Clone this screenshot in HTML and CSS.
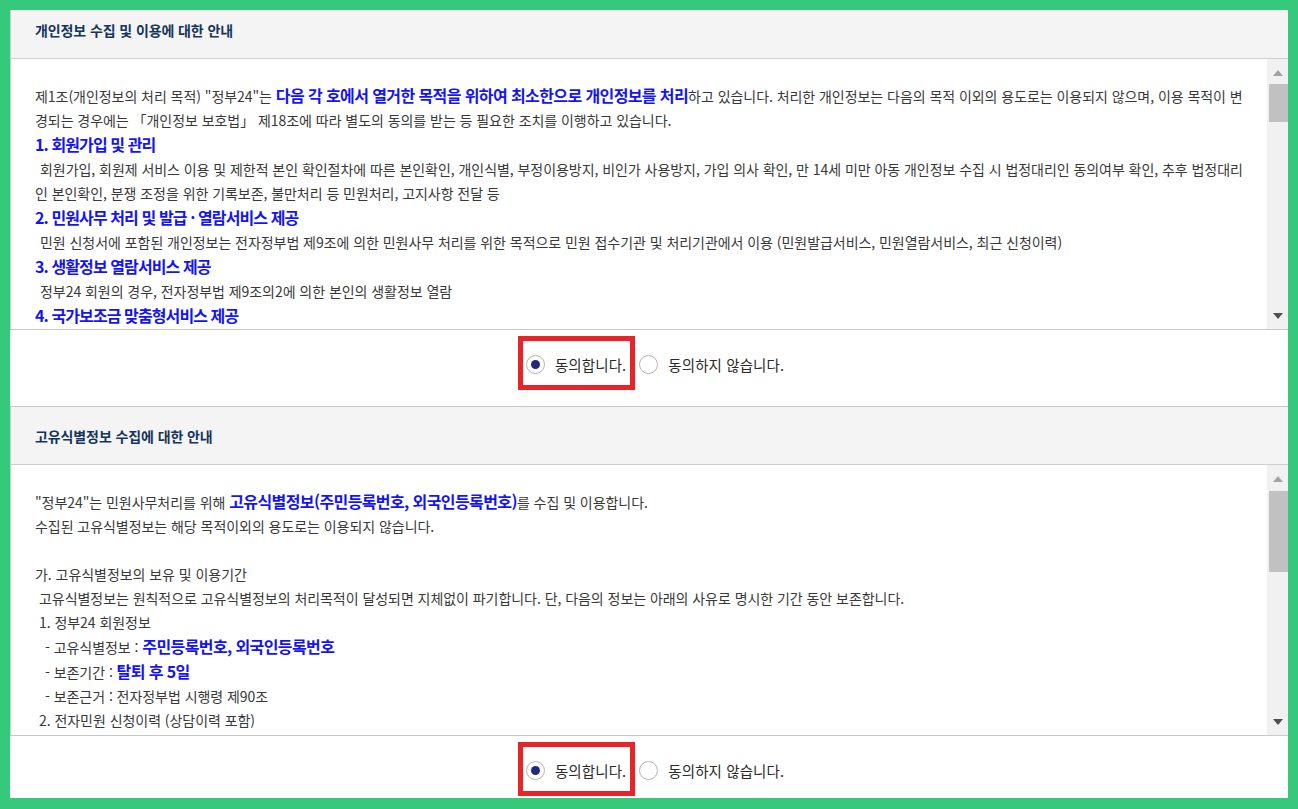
FILE: index.html
```html
<!DOCTYPE html>
<html lang="ko">
<head>
<meta charset="utf-8">
<title>정부24 약관 동의</title>
<link rel="stylesheet" href="styles.css">
</head>
<body>
<div class="viewport">
  <div class="page">
    <section class="agree">
      <h3 class="agree-head">개인정보 수집 및 이용에 대한 안내</h3>
      <div class="agree-box">
        <div class="agree-text">
          <p class="para">제1조(개인정보의 처리 목적) "정부24"는 <strong class="hl">다음 각 호에서 열거한 목적을 위하여 최소한으로 개인정보를 처리</strong>하고 있습니다. 처리한 개인정보는 다음의 목적 이외의 용도로는 이용되지 않으며, 이용 목적이 변<br>경되는 경우에는 「개인정보 보호법」 제18조에 따라 별도의 동의를 받는 등 필요한 조치를 이행하고 있습니다.</p>
          <h4 class="item-title">1. 회원가입 및 관리</h4>
          <p class="item-desc">회원가입, 회원제 서비스 이용 및 제한적 본인 확인절차에 따른 본인확인, 개인식별, 부정이용방지, 비인가 사용방지, 가입 의사 확인, 만 14세 미만 아동 개인정보 수집 시 법정대리인 동의여부 확인, 추후 법정대리<br>인 본인확인, 분쟁 조정을 위한 기록보존, 불만처리 등 민원처리, 고지사항 전달 등</p>
          <h4 class="item-title">2. 민원사무 처리 및 발급 · 열람서비스 제공</h4>
          <p class="item-desc">민원 신청서에 포함된 개인정보는 전자정부법 제9조에 의한 민원사무 처리를 위한 목적으로 민원 접수기관 및 처리기관에서 이용 (민원발급서비스, 민원열람서비스, 최근 신청이력)</p>
          <h4 class="item-title">3. 생활정보 열람서비스 제공</h4>
          <p class="item-desc">정부24 회원의 경우, 전자정부법 제9조의2에 의한 본인의 생활정보 열람</p>
          <h4 class="item-title">4. 국가보조금 맞춤형서비스 제공</h4>
        </div>
        <div class="scrollbar" aria-hidden="true">
          <span class="sb-arrow sb-up"></span>
          <span class="sb-thumb" style="top:25px;height:38px"></span>
          <span class="sb-arrow sb-down"></span>
        </div>
      </div>
      <div class="agree-choice">
        <label class="choice is-marked"><input type="radio" name="agree1" checked><span>동의합니다.</span></label>
        <label class="choice"><input type="radio" name="agree1"><span>동의하지 않습니다.</span></label>
      </div>
    </section>

    <section class="agree">
      <h3 class="agree-head">고유식별정보 수집에 대한 안내</h3>
      <div class="agree-box">
        <div class="agree-text">
          <p class="para">"정부24"는 민원사무처리를 위해 <strong class="hl">고유식별정보(주민등록번호, 외국인등록번호)</strong>를 수집 및 이용합니다.<br>수집된 고유식별정보는 해당 목적이외의 용도로는 이용되지 않습니다.</p>
          <p class="para gap-top">가. 고유식별정보의 보유 및 이용기간</p>
          <p class="para ind1">고유식별정보는 원칙적으로 고유식별정보의 처리목적이 달성되면 지체없이 파기합니다. 단, 다음의 정보는 아래의 사유로 명시한 기간 동안 보존합니다.</p>
          <p class="para ind1">1. 정부24 회원정보</p>
          <p class="para ind2">- 고유식별정보 : <strong class="hl">주민등록번호, 외국인등록번호</strong></p>
          <p class="para ind2">- 보존기간 : <strong class="hl">탈퇴 후 5일</strong></p>
          <p class="para ind2">- 보존근거 : 전자정부법 시행령 제90조</p>
          <p class="para ind1">2. 전자민원 신청이력 (상담이력 포함)</p>
        </div>
        <div class="scrollbar" aria-hidden="true">
          <span class="sb-arrow sb-up"></span>
          <span class="sb-thumb" style="top:26px;height:81px"></span>
          <span class="sb-arrow sb-down"></span>
        </div>
      </div>
      <div class="agree-choice">
        <label class="choice is-marked"><input type="radio" name="agree2" checked><span>동의합니다.</span></label>
        <label class="choice"><input type="radio" name="agree2"><span>동의하지 않습니다.</span></label>
      </div>
    </section>
  </div>
</div>
</body>
</html>
```

FILE: styles.css
```css
html, body {
  margin: 0;
  padding: 0;
}

body {
  background: #34c97b;
  font-family: "Noto Sans CJK KR", "Noto Sans", sans-serif;
}

.viewport {
  margin: 10px;
  width: 1278px;
  height: 788px;
  background: #fff;
  overflow: hidden;
}

.page {
  margin-top: -9px;
}

.agree-head {
  margin: 0;
  height: 58px;
  box-sizing: border-box;
  display: flex;
  align-items: center;
  padding-left: 24px;
  background: #f4f4f4;
  border-left: 1px solid #cdcdcd;
  border-bottom: 1px solid #cfcfcf;
  font-size: 14px;
  font-weight: 700;
  letter-spacing: -0.1px;
  color: #14355c;
}

.agree-box {
  display: flex;
  height: 271px;
  box-sizing: border-box;
  border-left: 1px solid #cdcdcd;
  border-bottom: 1px solid #c9c9c9;
}

.agree-text {
  flex: 1;
  min-width: 0;
  overflow: hidden;
  padding: 24px 4px 0 24px;
  font-size: 14px;
  line-height: 24px;
  letter-spacing: -0.05px;
  color: #383838;
  white-space: nowrap;
}

.para {
  margin: 0;
}

.gap-top {
  margin-top: 24px;
}

.ind1 {
  padding-left: 4px;
}

.ind2 {
  padding-left: 10px;
}

.item-title {
  margin: 0;
  font-size: 16px;
  line-height: 25px;
  font-weight: 700;
  letter-spacing: -0.9px;
  color: #1414f2;
}

.item-desc {
  margin: 0;
  text-indent: 5px;
}

.hl {
  font-size: 16px;
  font-weight: 700;
  letter-spacing: -0.6px;
  color: #1414f2;
}

.scrollbar {
  position: relative;
  width: 21px;
  flex: none;
  background: #f1f1f1;
  display: flex;
  flex-direction: column;
  justify-content: space-between;
  align-items: center;
  padding: 11px 0 10px;
  box-sizing: border-box;
}

.sb-arrow {
  width: 0;
  height: 0;
  border-left: 5px solid transparent;
  border-right: 5px solid transparent;
}

.sb-up {
  border-bottom: 6px solid #a3a3a3;
}

.sb-down {
  border-top: 6px solid #505050;
}

.sb-thumb {
  position: absolute;
  left: 2px;
  right: 0;
  background: #c1c1c1;
}

.agree-choice {
  height: 77px;
  box-sizing: border-box;
  border-bottom: 1px solid #c9c9c9;
  display: flex;
  justify-content: center;
  align-items: flex-start;
  gap: 13px;
  padding-top: 22px;
  padding-left: 12px;
}

.choice {
  position: relative;
  display: inline-flex;
  align-items: center;
  gap: 10px;
  height: 24px;
  font-size: 14.5px;
  letter-spacing: 0.1px;
  color: #2a2a2a;
  cursor: pointer;
}

.choice input {
  appearance: none;
  -webkit-appearance: none;
  margin: 0;
  width: 19px;
  height: 19px;
  box-sizing: border-box;
  border: 1.5px solid #b4b4b4;
  border-radius: 50%;
  background: #fff;
  display: grid;
  place-content: center;
}

.choice input:checked::before {
  content: "";
  width: 9px;
  height: 9px;
  border-radius: 50%;
  background: #1d2a7e;
}

.is-marked::after {
  content: "";
  position: absolute;
  left: -8px;
  right: -9px;
  top: -16px;
  bottom: -14px;
  border: 5px solid #e8232a;
  pointer-events: none;
}
```
